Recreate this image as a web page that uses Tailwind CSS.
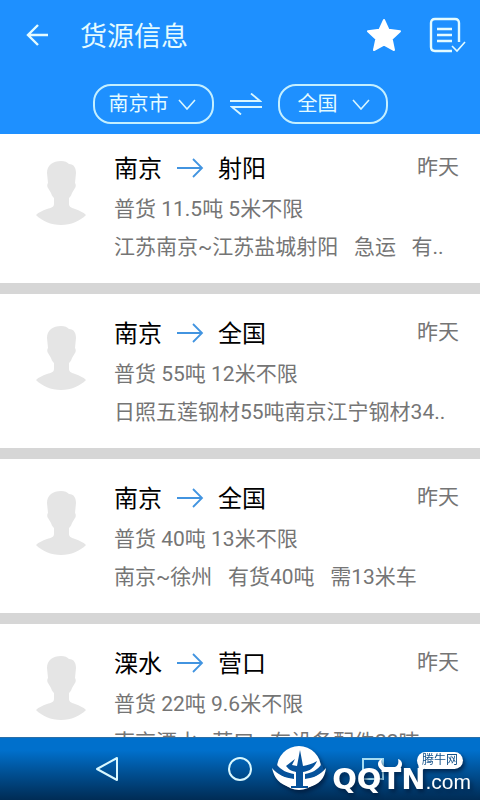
<!DOCTYPE html>
<html lang="zh-CN">
<head>
    <meta charset="UTF-8">
    <meta name="viewport" content="width=device-width, initial-scale=1.0">
    <title>货源信息</title>
    <script src="https://cdn.jsdelivr.net/npm/@tailwindcss/browser@4"></script>
</head>
<body class="bg-white font-['Roboto','Noto_Sans_CJK_SC',sans-serif] h-screen flex flex-col overflow-hidden">

    <!-- Shared icons -->
    <svg class="hidden">
        <symbol id="avatar" viewBox="0 0 52 64">
            <path fill="#e5e5e5" d="M25 0c4 0 6 1 8 3 5 0 7 4 7 9l-1 10c1 1 1 4 0 5-1 2-2 3-3 5-1 3-2 4-3 5v6c0 3 3 4 6 5 5 2 8 3 11 6-6 6-15 10-25 10S6 60 0 54c3-3 6-4 11-6 4-1 7-2 7-5v-6c-1-1-2-2-3-5-1-2-2-3-3-5-1-1-1-4 0-5l-1-10C11 4 17 0 25 0z"/>
        </symbol>
        <symbol id="to" viewBox="0 0 28 20">
            <path fill="none" stroke="#4294e0" stroke-width="1.8" d="M1 10h25M17 1l9 9-9 9"/>
        </symbol>
        <symbol id="chevron" viewBox="0 0 18 11">
            <path fill="none" stroke="#d8f6ff" stroke-width="1.6" d="M1 1l8 9 8-9"/>
        </symbol>
    </svg>

    <!-- Header -->
    <header class="bg-[#1e90ff] text-[#e4fbff] shrink-0 h-[134px]">
        <div class="flex items-center h-[70px] pl-[26px] pr-[14px]">
            <button aria-label="返回" class="mr-8">
                <svg class="w-[22px] h-[22px]" viewBox="0 0 22 22" fill="none" stroke="currentColor" stroke-width="2.4"><path d="M22 11H2M12 1L2 11l10 10"/></svg>
            </button>
            <h1 class="text-[27px] leading-10 flex-1 pt-1">货源信息</h1>
            <button aria-label="收藏" class="mr-7">
                <svg class="w-[34px] h-[34px]" viewBox="0 0 34 34" fill="#fff" stroke="#fff" stroke-width="2" stroke-linejoin="round"><path d="M17 2l4.6 9.8L33 13.200l-8.300 7.700L27 32l-10-5.400L7 32l2.300-11.100L1 13.200l11.400-1.400z"/></svg>
            </button>
            <button aria-label="订单">
                <svg class="w-[37px] h-[36px]" viewBox="0 0 37 36" fill="none" stroke="currentColor">
                    <path stroke-width="2.400" d="M30 25V6q0-4-4-4H6Q2 2 2 6v24q0 4 4 4h17"/>
                    <path stroke-width="2.600" d="M8 12h15M8 18h15M8 24h15"/>
                    <path stroke-width="1.600" d="M23 29l5 5 8-9"/>
                </svg>
            </button>
        </div>
        <div class="flex items-center justify-center gap-4 h-[67px]">
            <label class="relative">
                <select aria-label="出发地" class="appearance-none block w-[121px] h-10 pl-[14px] rounded-[18px] border-2 border-[#c4efff] bg-transparent text-xl leading-9 text-[#e4fbff]">
                    <option>南京市</option>
                </select>
                <svg class="absolute right-[18px] top-[15px] w-[18px] h-[11px] pointer-events-none"><use href="#chevron"/></svg>
            </label>
            <button aria-label="交换">
                <svg class="w-8 h-[22px]" viewBox="0 0 32 22" fill="none" stroke="#d8f6ff" stroke-width="1.800"><path d="M0 8h30l-9-7.500M32 14H2l9 7.500"/></svg>
            </button>
            <label class="relative">
                <select aria-label="目的地" class="appearance-none block w-[110px] h-10 pl-[18px] rounded-[18px] border-2 border-[#c4efff] bg-transparent text-xl leading-9 text-[#e4fbff]">
                    <option>全国</option>
                </select>
                <svg class="absolute right-[18px] top-[15px] w-[18px] h-[11px] pointer-events-none"><use href="#chevron"/></svg>
            </label>
        </div>
    </header>

    <!-- Goods list -->
    <main class="flex-1 overflow-hidden">
        <ul class="text-[21px] text-[#757575]">
            <li class="flex pt-[15px] pb-[18px] pl-9 pr-[21px] border-b-[11px] border-[#d6d6d6]">
                <svg class="w-[52px] h-16 mt-3 mr-[26px] shrink-0"><use href="#avatar"/></svg>
                <div class="flex-1 min-w-0">
                    <div class="flex">
                        <h2 class="flex items-center h-10 flex-1 gap-[14px] text-2xl text-black">南京<svg class="w-7 h-5 mb-0.5"><use href="#to"/></svg>射阳</h2>
                        <span class="leading-9">昨天</span>
                    </div>
                    <p class="leading-10">普货 11.5吨 5米不限</p>
                    <p class="leading-9 whitespace-pre">江苏南京~江苏盐城射阳   急运   有..</p>
                </div>
            </li>
            <li class="flex pt-5 pb-[18px] pl-9 pr-[21px] border-b-[11px] border-[#d6d6d6]">
                <svg class="w-[52px] h-16 mt-3 mr-[26px] shrink-0"><use href="#avatar"/></svg>
                <div class="flex-1 min-w-0">
                    <div class="flex">
                        <h2 class="flex items-center h-10 flex-1 gap-[14px] text-2xl text-black">南京<svg class="w-7 h-5 mb-0.5"><use href="#to"/></svg>全国</h2>
                        <span class="leading-9">昨天</span>
                    </div>
                    <p class="leading-10">普货 55吨 12米不限</p>
                    <p class="leading-9 whitespace-pre">日照五莲钢材55吨南京江宁钢材34..</p>
                </div>
            </li>
            <li class="flex pt-5 pb-[18px] pl-9 pr-[21px] border-b-[11px] border-[#d6d6d6]">
                <svg class="w-[52px] h-16 mt-3 mr-[26px] shrink-0"><use href="#avatar"/></svg>
                <div class="flex-1 min-w-0">
                    <div class="flex">
                        <h2 class="flex items-center h-10 flex-1 gap-[14px] text-2xl text-black">南京<svg class="w-7 h-5 mb-0.5"><use href="#to"/></svg>全国</h2>
                        <span class="leading-9">昨天</span>
                    </div>
                    <p class="leading-10">普货 40吨 13米不限</p>
                    <p class="leading-9 whitespace-pre">南京~徐州   有货40吨   需13米车</p>
                </div>
            </li>
            <li class="flex pt-5 pb-[18px] pl-9 pr-[21px] border-b-[11px] border-[#d6d6d6]">
                <svg class="w-[52px] h-16 mt-3 mr-[26px] shrink-0"><use href="#avatar"/></svg>
                <div class="flex-1 min-w-0">
                    <div class="flex">
                        <h2 class="flex items-center h-10 flex-1 gap-[14px] text-2xl text-black">溧水<svg class="w-7 h-5 mb-0.5"><use href="#to"/></svg>营口</h2>
                        <span class="leading-9">昨天</span>
                    </div>
                    <p class="leading-10">普货 22吨 9.6米不限</p>
                    <p class="leading-9 whitespace-pre">南京溧水~营口   有设备配件22吨</p>
                </div>
            </li>
        </ul>
    </main>

    <!-- System navigation -->
    <nav class="relative shrink-0 h-[63px] border-t border-[#2a6fa8] bg-linear-to-b from-[#0070cc] from-20% to-[#002c55]">
        <div class="flex items-center justify-center h-[62px] gap-[110px] text-[#d8f8ff]">
            <button aria-label="后退"><svg class="w-[22px] h-[26px]" viewBox="0 0 22 26" fill="none" stroke="currentColor" stroke-width="2"><path d="M21 2v22L1 13z" stroke-linejoin="round"/></svg></button>
            <button aria-label="主页"><svg class="w-6 h-6" viewBox="0 0 24 24" fill="none" stroke="currentColor" stroke-width="2"><circle cx="12" cy="12" r="11"/></svg></button>
            <button aria-label="最近任务"><svg class="w-[22px] h-[22px]" viewBox="0 0 22 22" fill="none" stroke="#a5dcf2" stroke-width="2"><path d="M1 1h20v20H1z"/></svg></button>
        </div>

        <!-- Site badge over the bar -->
        <div class="absolute right-[9px] bottom-[5px] flex items-end text-white drop-shadow-[2px_3px_2px_rgba(0,20,50,0.7)]">
            <svg class="w-[54px] h-[46px] mb-[3px] mr-1.5" viewBox="0 0 54 46">
                <circle fill="#fff" cx="27" cy="22" r="22"/>
                <path fill="#06529b" d="M4 18c5 6 11 9 18 10v5C14 33 7 30 2 24zM50 18c-5 6-10 9-17 10v5c8 0 14-3 19-9z"/>
                <path fill="#fff" d="M0 22c6 7 13 10 22 11v3l-4 5C8 39 2 32 0 22zM54 22c-6 7-12 10-21 11v3l4 5c10-2 16-9 17-19z"/>
                <path fill="#06529b" d="M28 4l3 16c5-1 9-2 14-5-3 7-7 10-14 11v14h5v2H19v-2h5V26c-4-1-7-2-10-6l9-7-3 6 5 1z"/>
            </svg>
            <div class="relative flex items-baseline">
                <span class="font-['DejaVu_Sans',sans-serif] font-bold text-[29px] leading-8">QQTN</span>
                <span class="font-['Liberation_Sans',sans-serif] text-[21px] leading-6">.com</span>
                <svg class="absolute left-[45px] -top-[6px] w-[26px] h-4" viewBox="0 0 26 16"><path fill="#fff" d="M5 2C-1 4 0 11 6 14h14c6-3 7-10 1-12 1 4 0 7-3 8H8C5 9 4 6 5 2z"/></svg>
                <div class="absolute right-2 -top-[11px]">
                    <svg class="absolute left-0 top-2 w-3 h-3" viewBox="0 0 12 12"><path fill="#fff" d="M1 0l1 12 8-5z"/></svg>
                    <span class="relative block h-[17px] px-[5px] rounded-full bg-white text-[12px] leading-4 text-[#14528a]">腾牛网</span>
                </div>
            </div>
        </div>
    </nav>

</body>
</html>
